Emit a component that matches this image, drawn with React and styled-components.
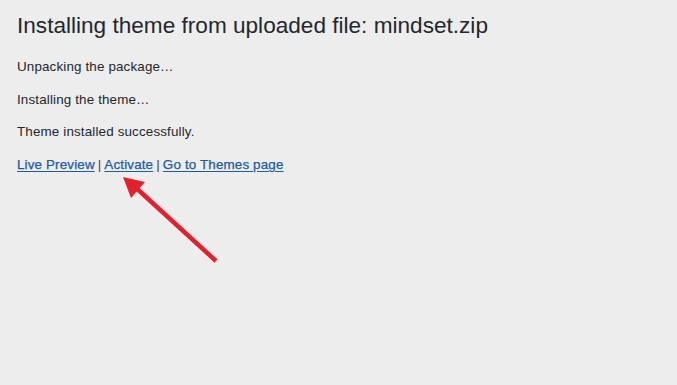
import React from 'react'
import styled, { createGlobalStyle } from 'styled-components'

const Global = createGlobalStyle`
    html, body {
        margin: 0;
        background: #ededed;
    }
    body {
        font-family: "Liberation Sans", Arial, sans-serif;
        color: #23282d;
    }
`

const Wrap = styled.div`
    position: relative;
    height: 385px;
    padding: 11px 17px 0;
    box-sizing: border-box;
`

const Title = styled.h1`
    font-size: 22.6px;
    font-weight: 400;
    line-height: 1.3;
    margin: 0 0 17px;
`

const Line = styled.p`
    font-size: 13.4px;
    letter-spacing: 0.15px;
    line-height: 1.5;
    margin: 0 0 12.4px;
`

const Link = styled.a`
    color: #1f5ba3;
    text-decoration: underline;
    text-underline-offset: 2px;
    -webkit-text-stroke: 0.25px #1f5ba3;
    cursor: pointer;
`

const Sep = styled.span`
    color: #3c434a;
    margin: 0 3px;
`

const Arrow = styled.svg`
    position: absolute;
    left: 0;
    top: 0;
    pointer-events: none;
`

function App() {
    return (
        <Wrap>
            <Global />
            <Title>Installing theme from uploaded file: mindset.zip</Title>
            <Line>Unpacking the package…</Line>
            <Line>Installing the theme…</Line>
            <Line>Theme installed successfully.</Line>
            <Line>
                <Link>Live Preview</Link>
                <Sep>|</Sep>
                <Link>Activate</Link>
                <Sep>|</Sep>
                <Link>Go to Themes page</Link>
            </Line>
            <Arrow width="677" height="385">
                <line x1="216" y1="261" x2="134" y2="186" stroke="#e3202b" strokeWidth="4.5" />
                <polygon points="123,177 145,182 131,198" fill="#e3202b" />
            </Arrow>
        </Wrap>
    )
}

export default App
